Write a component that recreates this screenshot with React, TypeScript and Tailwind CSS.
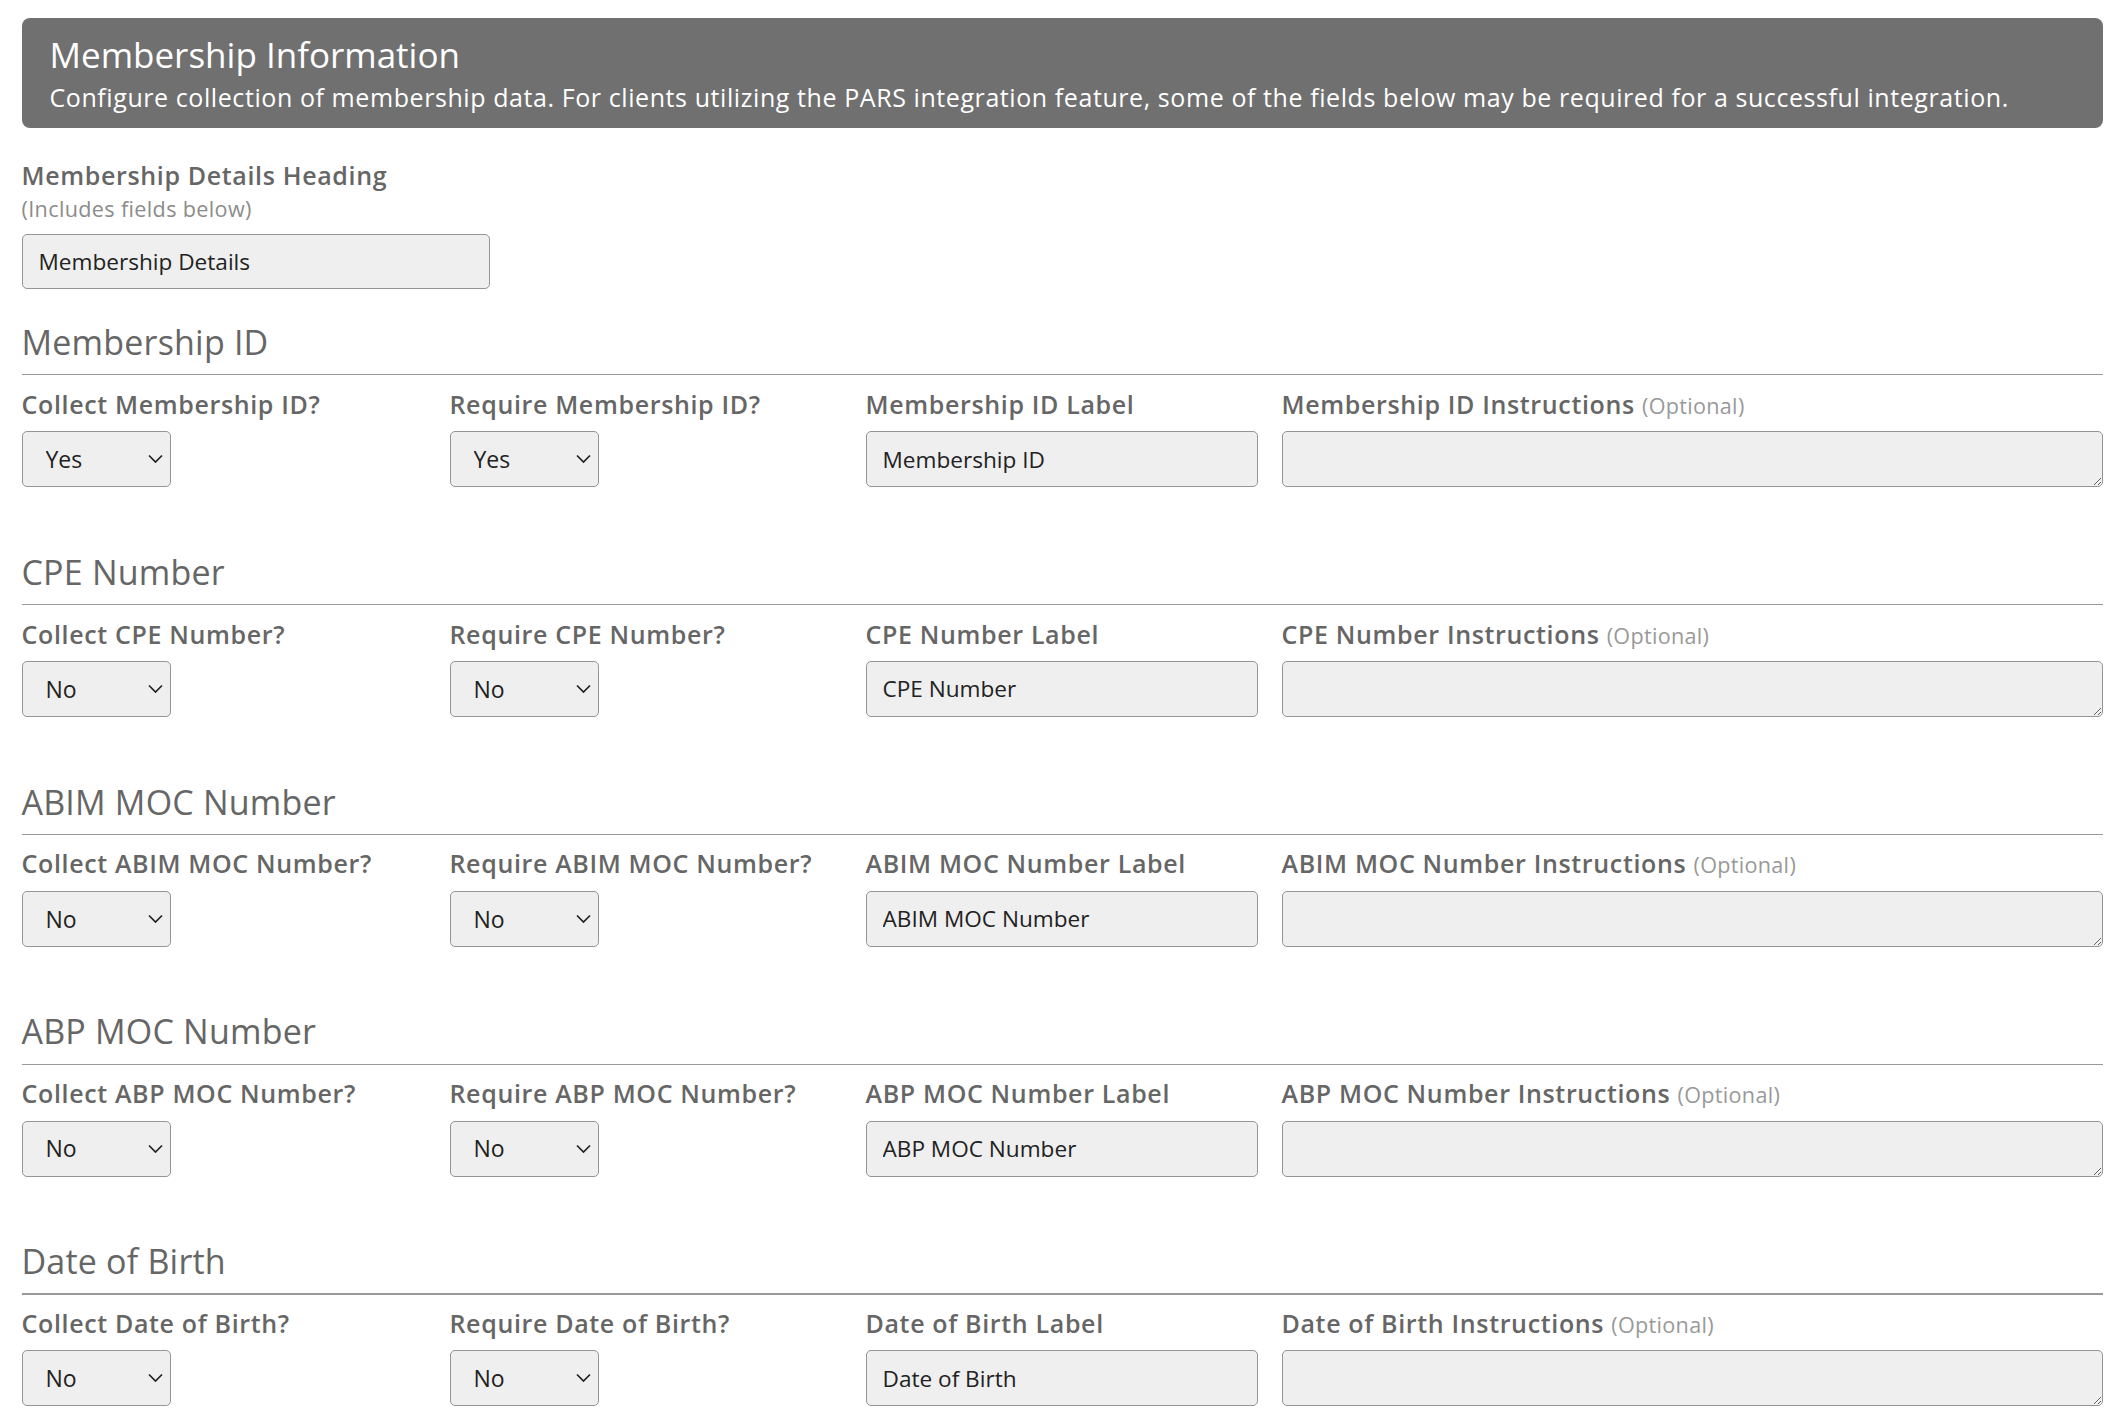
import React from "react";

type Section = {
  title: string;
  collect: string;
  require: string;
  label: string;
  value: string;
  instr: string;
  sel1: string;
  sel2: string;
};

const sections: Section[] = [
  {
    title: "Membership ID",
    collect: "Collect Membership ID?",
    require: "Require Membership ID?",
    label: "Membership ID Label",
    value: "Membership ID",
    instr: "Membership ID Instructions",
    sel1: "Yes",
    sel2: "Yes",
  },
  {
    title: "CPE Number",
    collect: "Collect CPE Number?",
    require: "Require CPE Number?",
    label: "CPE Number Label",
    value: "CPE Number",
    instr: "CPE Number Instructions",
    sel1: "No",
    sel2: "No",
  },
  {
    title: "ABIM MOC Number",
    collect: "Collect ABIM MOC Number?",
    require: "Require ABIM MOC Number?",
    label: "ABIM MOC Number Label",
    value: "ABIM MOC Number",
    instr: "ABIM MOC Number Instructions",
    sel1: "No",
    sel2: "No",
  },
  {
    title: "ABP MOC Number",
    collect: "Collect ABP MOC Number?",
    require: "Require ABP MOC Number?",
    label: "ABP MOC Number Label",
    value: "ABP MOC Number",
    instr: "ABP MOC Number Instructions",
    sel1: "No",
    sel2: "No",
  },
  {
    title: "Date of Birth",
    collect: "Collect Date of Birth?",
    require: "Require Date of Birth?",
    label: "Date of Birth Label",
    value: "Date of Birth",
    instr: "Date of Birth Instructions",
    sel1: "No",
    sel2: "No",
  },
];

function Chevron() {
  return (
    <svg
      className="pointer-events-none absolute right-[8px] top-1/2 -translate-y-1/2"
      width="15"
      height="9"
      viewBox="0 0 15 9"
      fill="none"
    >
      <path d="M1 1l6.5 6.5L14 1" stroke="#222" strokeWidth="1.7" />
    </svg>
  );
}

function Select({ value }: { value: string }) {
  return (
    <div className="relative w-[149px] h-[56px]">
      <select
        defaultValue={value}
        className="appearance-none w-full h-full rounded-[5px] border border-[#959595] bg-[#efefef] pl-[23px] text-[23px] text-[#222] outline-none"
      >
        <option>Yes</option>
        <option>No</option>
      </select>
      <Chevron />
    </div>
  );
}

function Label({ children }: { children: React.ReactNode }) {
  return (
    <div className="h-[34px] text-[25px] leading-[34px] font-semibold tracking-[0.65px] text-[#666] whitespace-nowrap">
      {children}
    </div>
  );
}

export default function App() {
  return (
    <div
      className="min-h-[1426px] w-full bg-white pl-[21.5px] pr-[13px] pt-[17.5px]"
      style={{ fontFamily: '"Open Sans", "Noto Sans", sans-serif' }}
    >
      <div className="rounded-[8px] bg-[#707070] pl-[28px] pr-[20px] pt-[13px] pb-[14.5px] text-white">
        <div className="text-[35px] leading-[48px] font-medium">
          Membership Information
        </div>
        <div className="mt-[1px] text-[25px] leading-[34px] tracking-[0.58px] whitespace-nowrap">
          Configure collection of membership data. For clients utilizing the
          PARS integration feature, some of the fields below may be required
          for a successful integration.
        </div>
      </div>

      <div className="mt-[30.3px]">
        <Label>Membership Details Heading</Label>
        <div className="mt-[2.3px] text-[21.6px] leading-[28px] tracking-[0.35px] text-[#8c8c8c]">
          (Includes fields below)
        </div>
        <input
          defaultValue="Membership Details"
          className="mt-[11.4px] block w-[468px] h-[55px] rounded-[5px] border border-[#959595] bg-[#efefef] px-[16px] text-[22.6px] text-[#222] outline-none"
        />
      </div>

      {sections.map((s, i) => (
        <div key={s.title} className={i === 0 ? "mt-[29.8px]" : "mt-[61.6px]"}>
          <h2 className="h-[46px] text-[34px] leading-[46px] font-medium tracking-[0.2px] text-[#666]">
            {s.title}
          </h2>
          <div className="mt-[9.2px] h-[1.4px] bg-[#999]" />
          <div className="mt-[11.3px] grid grid-cols-[404px_392px_392px_1fr] gap-x-[24px]">
            <div>
              <Label>{s.collect}</Label>
              <div className="mt-[10.4px]">
                <Select value={s.sel1} />
              </div>
            </div>
            <div>
              <Label>{s.require}</Label>
              <div className="mt-[10.4px]">
                <Select value={s.sel2} />
              </div>
            </div>
            <div>
              <Label>{s.label}</Label>
              <input
                defaultValue={s.value}
                className="mt-[10.4px] block w-full h-[56px] rounded-[5px] border border-[#959595] bg-[#efefef] px-[16px] text-[22.6px] text-[#222] outline-none"
              />
            </div>
            <div>
              <Label>
                {s.instr}{" "}
                <span className="font-normal leading-none tracking-[0.3px] text-[21.6px] text-[#999]">
                  (Optional)
                </span>
              </Label>
              <textarea className="mt-[10.4px] block w-full h-[56px] rounded-[5px] border border-[#959595] bg-[#efefef] px-[16px] text-[22.6px] text-[#222] outline-none" />
            </div>
          </div>
        </div>
      ))}
    </div>
  );
}
